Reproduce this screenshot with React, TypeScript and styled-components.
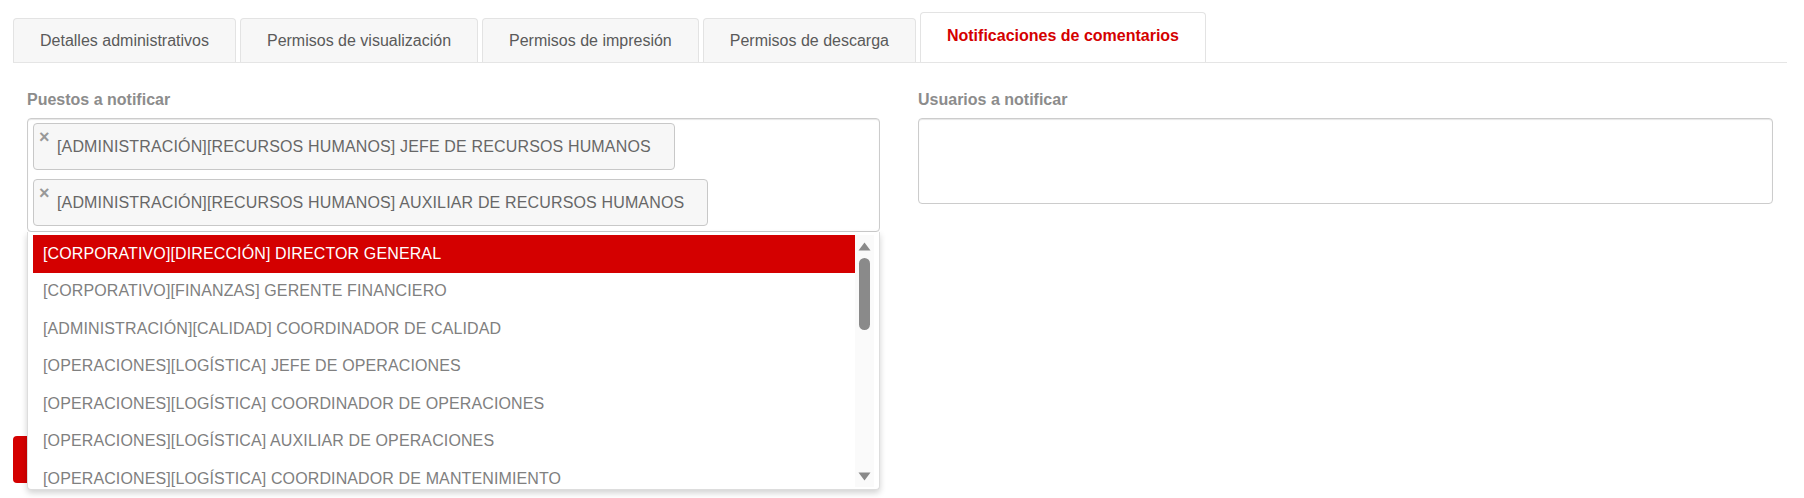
import React from 'react'
import styled, { createGlobalStyle } from 'styled-components'

const GlobalStyle = createGlobalStyle`
    html, body {
        margin: 0;
        padding: 0;
        background: #ffffff;
        font-family: 'Liberation Sans', Arial, sans-serif;
    }
`

const tabs = [
    'Detalles administrativos',
    'Permisos de visualización',
    'Permisos de impresión',
    'Permisos de descarga',
    'Notificaciones de comentarios',
]

const selected = [
    '[ADMINISTRACIÓN][RECURSOS HUMANOS] JEFE DE RECURSOS HUMANOS',
    '[ADMINISTRACIÓN][RECURSOS HUMANOS] AUXILIAR DE RECURSOS HUMANOS',
]

const options = [
    '[CORPORATIVO][DIRECCIÓN] DIRECTOR GENERAL',
    '[CORPORATIVO][FINANZAS] GERENTE FINANCIERO',
    '[ADMINISTRACIÓN][CALIDAD] COORDINADOR DE CALIDAD',
    '[OPERACIONES][LOGÍSTICA] JEFE DE OPERACIONES',
    '[OPERACIONES][LOGÍSTICA] COORDINADOR DE OPERACIONES',
    '[OPERACIONES][LOGÍSTICA] AUXILIAR DE OPERACIONES',
    '[OPERACIONES][LOGÍSTICA] COORDINADOR DE MANTENIMIENTO',
]

const App: React.FC = () => {
    return (
        <>
            <GlobalStyle />
            <Page>
                <TabBar>
                    {tabs.map((t, i) => (
                        <Tab key={t} $active={i === tabs.length - 1}>
                            {t}
                        </Tab>
                    ))}
                </TabBar>

                <Content>
                    <Column $width={853}>
                        <Label>Puestos a notificar</Label>
                        <SelectWrap>
                            <SelectBox>
                                {selected.map((s) => (
                                    <Choice key={s}>
                                        <Remove>×</Remove>
                                        <span>{s}</span>
                                    </Choice>
                                ))}
                            </SelectBox>
                            <Dropdown>
                                <OptionList>
                                    {options.map((o, i) => (
                                        <Option key={o} $highlighted={i === 0}>
                                            {o}
                                        </Option>
                                    ))}
                                </OptionList>
                                <ScrollTrack>
                                    <svg width="13" height="9" viewBox="0 0 13 9">
                                        <path d="M6.5 0.5 L12.5 8.5 L0.5 8.5 Z" fill="#8a8a8a" />
                                    </svg>
                                    <Thumb />
                                    <TrackSpacer />
                                    <svg width="13" height="9" viewBox="0 0 13 9">
                                        <path d="M0.5 0.5 L12.5 0.5 L6.5 8.5 Z" fill="#8a8a8a" />
                                    </svg>
                                </ScrollTrack>
                            </Dropdown>
                        </SelectWrap>
                    </Column>
                    <Column $width={855}>
                        <Label>Usuarios a notificar</Label>
                        <EmptyBox />
                    </Column>
                </Content>

                <Footer>
                    <SaveButton>Guardar</SaveButton>
                </Footer>
            </Page>
        </>
    )
}

const Page = styled.div`
    width: 1804px;
    height: 498px;
    box-sizing: border-box;
    padding: 12px 17px 0 13px;
    overflow: hidden;
`

const TabBar = styled.div`
    display: flex;
    align-items: flex-end;
    gap: 4px;
    border-bottom: 1px solid #e5e5e5;
`

const Tab = styled.div<{ $active?: boolean }>`
    display: flex;
    align-items: center;
    box-sizing: border-box;
    height: ${(p) => (p.$active ? '50px' : '44px')};
    padding: ${(p) => (p.$active ? '0 26px 3px' : '0 26px')};
    border: 1px solid #e3e3e3;
    border-bottom: none;
    border-radius: 4px 4px 0 0;
    background: ${(p) => (p.$active ? '#ffffff' : '#f7f7f7')};
    color: ${(p) => (p.$active ? '#d40000' : '#5a5a5a')};
    font-size: 16px;
    font-weight: ${(p) => (p.$active ? 700 : 400)};
    white-space: nowrap;
`

const Content = styled.div`
    display: flex;
    gap: 38px;
    padding: 27px 0 0 14px;
`

const Column = styled.div<{ $width: number }>`
    width: ${(p) => p.$width}px;
    flex: none;
`

const Label = styled.div`
    font-size: 16px;
    font-weight: 700;
    line-height: 20px;
    color: #8c8c8c;
    margin-bottom: 8px;
`

const SelectWrap = styled.div`
    position: relative;
`

const SelectBox = styled.div`
    display: flex;
    flex-direction: column;
    align-items: flex-start;
    gap: 9px;
    padding: 4px 5px 5px;
    border: 1px solid #cccccc;
    border-radius: 4px;
    box-shadow: inset 0 1px 1px rgba(0, 0, 0, 0.1);
`

const Choice = styled.div`
    display: flex;
    align-items: center;
    box-sizing: border-box;
    height: 47px;
    padding: 0 23px 0 5px;
    border: 1px solid #c8c8c8;
    border-radius: 4px;
    background: #f7f7f7;
    color: #676767;
    font-size: 16px;
    letter-spacing: 0.15px;
    white-space: nowrap;
`

const Remove = styled.span`
    align-self: flex-start;
    width: 11px;
    margin: 4px 7px 0 0;
    font-size: 18px;
    font-weight: 700;
    line-height: 18px;
    color: #999999;
`

const Dropdown = styled.div`
    position: absolute;
    top: 100%;
    left: 0;
    right: 0;
    display: flex;
    height: 258px;
    box-sizing: border-box;
    padding: 3px 5px 2px 5px;
    border: 1px solid #dddddd;
    border-top: none;
    border-radius: 0 0 4px 4px;
    background: #ffffff;
    box-shadow: 0 3px 6px rgba(0, 0, 0, 0.18);
    overflow: hidden;
`

const OptionList = styled.div`
    flex: 1;
    overflow: hidden;
`

const Option = styled.div<{ $highlighted?: boolean }>`
    height: 37.5px;
    display: flex;
    align-items: center;
    padding-left: 10px;
    font-family: 'Liberation Sans', Arial, sans-serif;
    font-size: 16px;
    letter-spacing: 0.12px;
    white-space: nowrap;
    background: ${(p) => (p.$highlighted ? '#d40000' : 'transparent')};
    color: ${(p) => (p.$highlighted ? '#ffffff' : '#808080')};
`

const ScrollTrack = styled.div`
    width: 19px;
    flex: none;
    display: flex;
    flex-direction: column;
    align-items: center;
    padding: 7px 0 6px;
    box-sizing: border-box;
    background: #fafafa;
`

const Thumb = styled.div`
    width: 11px;
    height: 72px;
    margin-top: 7px;
    border-radius: 6px;
    background: #8a8a8a;
`

const TrackSpacer = styled.div`
    flex: 1;
`

const EmptyBox = styled.div`
    height: 86px;
    box-sizing: border-box;
    border: 1px solid #cccccc;
    border-radius: 4px;
    box-shadow: inset 0 1px 1px rgba(0, 0, 0, 0.1);
`

const Footer = styled.div`
    margin-top: 204px;
`

const SaveButton = styled.button`
    height: 47px;
    padding: 0 28px;
    border: none;
    border-radius: 4px;
    background: #d40000;
    color: #ffffff;
    font-family: 'Liberation Sans', Arial, sans-serif;
    font-size: 16px;
`

export default App
